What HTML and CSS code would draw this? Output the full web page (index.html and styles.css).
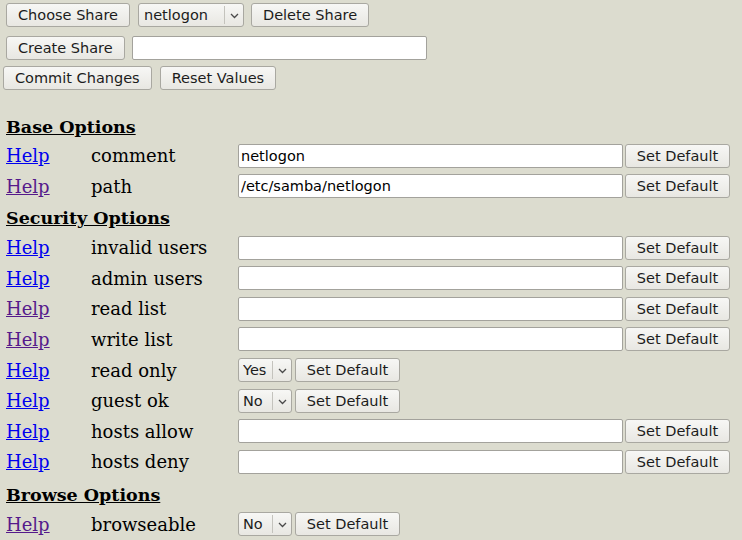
FILE: index.html
```html
<!DOCTYPE html>
<html>
<head>
<meta charset="utf-8">
<title>SWAT - Shares</title>
<link rel="stylesheet" href="styles.css">
</head>
<body>
<form class="page">
  <div class="bar bar-1">
    <button type="button" class="btn">Choose Share</button>
    <span class="sel sel-share"><select class="sel-input"><option>netlogon</option></select><svg class="chev" width="9" height="6" viewBox="0 0 9 6"><path d="M1 1 L4.5 4.5 L8 1" fill="none" stroke="#4a4a4a" stroke-width="1.3"/></svg></span>
    <button type="button" class="btn">Delete Share</button>
  </div>
  <div class="bar bar-2">
    <button type="button" class="btn">Create Share</button>
    <input type="text" class="txt txt-new" value="">
  </div>
  <div class="bar bar-3">
    <button type="button" class="btn">Commit Changes</button>
    <button type="button" class="btn">Reset Values</button>
  </div>

  <div class="params">
    <div class="row head"><span class="heading">Base Options</span></div>
    <div class="row"><a class="help" href="#">Help</a><span class="name">comment</span><input type="text" class="txt txt-val" value="netlogon"><button type="button" class="btn btn-def">Set Default</button></div>
    <div class="row"><a class="help visited" href="#">Help</a><span class="name">path</span><input type="text" class="txt txt-val" value="/etc/samba/netlogon"><button type="button" class="btn btn-def">Set Default</button></div>

    <div class="row head"><span class="heading">Security Options</span></div>
    <div class="row"><a class="help" href="#">Help</a><span class="name">invalid users</span><input type="text" class="txt txt-val" value=""><button type="button" class="btn btn-def">Set Default</button></div>
    <div class="row"><a class="help" href="#">Help</a><span class="name">admin users</span><input type="text" class="txt txt-val" value=""><button type="button" class="btn btn-def">Set Default</button></div>
    <div class="row"><a class="help visited" href="#">Help</a><span class="name">read list</span><input type="text" class="txt txt-val" value=""><button type="button" class="btn btn-def">Set Default</button></div>
    <div class="row"><a class="help visited" href="#">Help</a><span class="name">write list</span><input type="text" class="txt txt-val" value=""><button type="button" class="btn btn-def">Set Default</button></div>
    <div class="row"><a class="help" href="#">Help</a><span class="name">read only</span><span class="sel sel-bool"><select class="sel-input"><option>Yes</option></select><svg class="chev" width="9" height="6" viewBox="0 0 9 6"><path d="M1 1 L4.5 4.5 L8 1" fill="none" stroke="#4a4a4a" stroke-width="1.3"/></svg></span><button type="button" class="btn btn-def btn-near">Set Default</button></div>
    <div class="row"><a class="help" href="#">Help</a><span class="name">guest ok</span><span class="sel sel-bool"><select class="sel-input"><option>No</option></select><svg class="chev" width="9" height="6" viewBox="0 0 9 6"><path d="M1 1 L4.5 4.5 L8 1" fill="none" stroke="#4a4a4a" stroke-width="1.3"/></svg></span><button type="button" class="btn btn-def btn-near">Set Default</button></div>
    <div class="row"><a class="help" href="#">Help</a><span class="name">hosts allow</span><input type="text" class="txt txt-val" value=""><button type="button" class="btn btn-def">Set Default</button></div>
    <div class="row"><a class="help" href="#">Help</a><span class="name">hosts deny</span><input type="text" class="txt txt-val" value=""><button type="button" class="btn btn-def">Set Default</button></div>

    <div class="row head head-b"><span class="heading">Browse Options</span></div>
    <div class="row"><a class="help visited" href="#">Help</a><span class="name">browseable</span><span class="sel sel-bool"><select class="sel-input"><option>No</option></select><svg class="chev" width="9" height="6" viewBox="0 0 9 6"><path d="M1 1 L4.5 4.5 L8 1" fill="none" stroke="#4a4a4a" stroke-width="1.3"/></svg></span><button type="button" class="btn btn-def btn-near">Set Default</button></div>
  </div>
</form>
</body>
</html>
```
FILE: styles.css
```css
html, body {
  margin: 0;
  padding: 0;
  background: #dcdccf;
}
body {
  font-family: "DejaVu Serif", serif;
  font-size: 18px;
  color: #000;
  width: 742px;
  height: 540px;
  overflow: hidden;
}
.page {
  margin: 0;
}
.bar {
  display: flex;
  align-items: center;
}
.bar-1 {
  padding: 3px 0 0 6px;
  height: 24px;
  gap: 7px;
}
.bar-1 .sel-share {
  margin-left: 1px;
}
.bar-2 {
  padding: 9px 0 0 6px;
  height: 24px;
  gap: 6px;
}
.bar-3 {
  padding: 6px 0 0 3px;
  height: 24px;
  gap: 8px;
}

.btn {
  box-sizing: border-box;
  height: 24px;
  margin: 0;
  padding: 0 11px;
  font-family: "DejaVu Sans", sans-serif;
  font-size: 14.5px;
  color: #1c1c1c;
  background: linear-gradient(#f7f7f5, #e8e7e2);
  border: 1px solid #a9a8a1;
  border-radius: 3px;
  line-height: 20px;
  white-space: nowrap;
}

.txt {
  box-sizing: border-box;
  height: 24px;
  margin: 0;
  padding: 0 2px;
  font-family: "DejaVu Sans", sans-serif;
  font-size: 14.5px;
  color: #000;
  background: #fff;
  border: 1px solid #a3a29c;
  border-radius: 2px;
  outline: none;
}
.txt-new {
  width: 295px;
  margin-left: 1px;
}
.txt-val {
  width: 385px;
}

.sel {
  position: relative;
  display: inline-flex;
}
.sel-input {
  -webkit-appearance: none;
  appearance: none;
  box-sizing: border-box;
  height: 24px;
  margin: 0;
  padding: 0 20px 0 5px;
  font-family: "DejaVu Sans", sans-serif;
  font-size: 14.5px;
  color: #1c1c1c;
  background: linear-gradient(#f7f7f5, #e8e7e2);
  border: 1px solid #a9a8a1;
  border-radius: 3px;
  outline: none;
}
.sel::after {
  content: "";
  position: absolute;
  right: 19px;
  top: 3px;
  bottom: 3px;
  width: 1px;
  background: #c4c3bd;
}
.chev {
  position: absolute;
  right: 5px;
  top: 10px;
}
.sel-share .sel-input {
  width: 106px;
}
.sel-bool .sel-input {
  width: 54px;
  padding-left: 4px;
}

.params {
  padding: 20px 0 0 6px;
}
.row {
  display: flex;
  align-items: center;
  height: 30.6px;
}
.head {
  align-items: flex-end;
  padding-bottom: 3px;
  box-sizing: border-box;
}
.head-b {
  height: 32px;
}
.heading {
  font-weight: bold;
  font-size: 17.5px;
  text-decoration: underline;
  line-height: 22px;
}
.help {
  width: 85px;
  flex: none;
  color: #0000ee;
  text-decoration: underline;
}
.help.visited {
  color: #551a8b;
}
.name {
  width: 147px;
  flex: none;
}
.btn-def {
  width: 105px;
  margin-left: 2px;
  padding: 0;
}
.btn-near {
  margin-left: 3px;
}
```
